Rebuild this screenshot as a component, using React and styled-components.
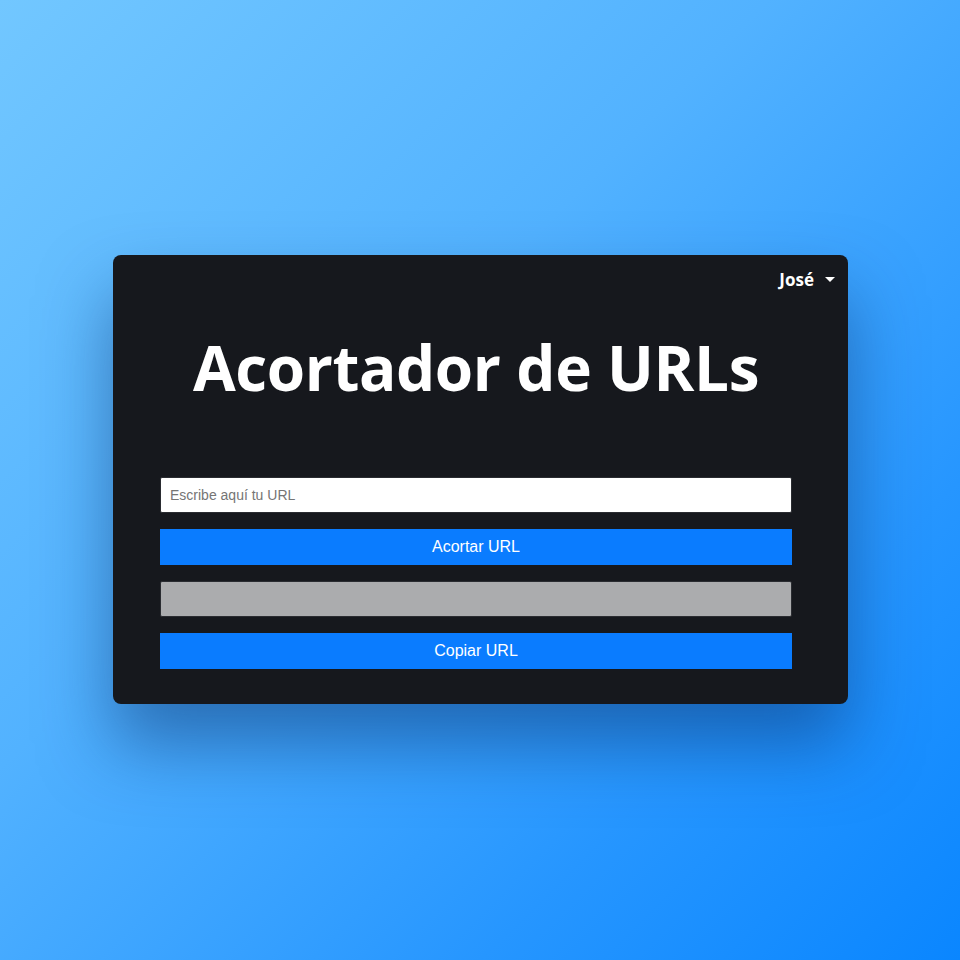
import React from "react";
import styled, { createGlobalStyle } from "styled-components";

const GlobalStyle = createGlobalStyle`
  html, body {
    margin: 0;
    padding: 0;
  }
  body {
    font-family: "Liberation Sans", Arial, sans-serif;
  }
`;

const App = () => {
    return <Page>
        <GlobalStyle/>
        <Card>
            <TopBar>
                <UserMenu>
                    José
                    <Caret/>
                </UserMenu>
            </TopBar>
            <Title>Acortador de URLs</Title>
            <Form>
                <UrlInput placeholder="Escribe aquí tu URL"/>
                <ActionButton>Acortar URL</ActionButton>
                <ResultField readOnly value=""/>
                <ActionButton>Copiar URL</ActionButton>
            </Form>
        </Card>
    </Page>
}

const Page = styled.div`
  width: 960px;
  height: 960px;
  box-sizing: border-box;
  padding-top: 255px;
  display: flex;
  justify-content: center;
  align-items: flex-start;
  background: linear-gradient(135deg, #72c7ff 0%, #52b2ff 40%, #2696ff 75%, #0a86ff 100%);
`;

const Card = styled.div`
  width: 735px;
  height: 449px;
  box-sizing: border-box;
  margin-left: 1px;
  background: #16181d;
  border-radius: 8px;
  box-shadow: 0 40px 70px rgba(10, 50, 110, 0.5);
  display: flex;
  flex-direction: column;
`;

const TopBar = styled.div`
  display: flex;
  justify-content: flex-end;
  padding: 15px 13px 0 0;
`;

const UserMenu = styled.div`
  display: flex;
  align-items: center;
  gap: 11px;
  color: #fff;
  font-family: "Open Sans", "Noto Sans", sans-serif;
  font-weight: 700;
  font-size: 17px;
  line-height: 20px;
`;

const Caret = styled.span`
  width: 0;
  height: 0;
  border-left: 5px solid transparent;
  border-right: 5px solid transparent;
  border-top: 5px solid #fff;
  margin-top: -2px;
`;

const Title = styled.h1`
  margin: 37px 0 0;
  padding-right: 9px;
  text-align: center;
  color: #fff;
  font-family: "Open Sans", "Noto Sans", sans-serif;
  font-weight: 700;
  font-size: 62px;
  line-height: 80px;
  letter-spacing: -0.4px;
`;

const Form = styled.div`
  display: flex;
  flex-direction: column;
  gap: 16px;
  margin: 70px 56px 0 47px;
`;

const fieldBase = `
  box-sizing: border-box;
  width: 100%;
  height: 36px;
  margin: 0;
  border: 1px solid #2a2c31;
  border-radius: 2px;
  font-family: "Liberation Sans", Arial, sans-serif;
  font-size: 14px;
  outline: none;
`;

const UrlInput = styled.input`
  ${fieldBase}
  padding: 0 9px;
  background: #fff;
  color: #333;
  &::placeholder {
    color: #757575;
  }
`;

const ResultField = styled.input`
  ${fieldBase}
  background: #abacae;
`;

const ActionButton = styled.button`
  box-sizing: border-box;
  width: 100%;
  height: 36px;
  border: none;
  border-radius: 0;
  background: #0a7cff;
  color: #fff;
  font-family: "Liberation Sans", Arial, sans-serif;
  font-size: 16px;
  cursor: pointer;
`;

export default App
